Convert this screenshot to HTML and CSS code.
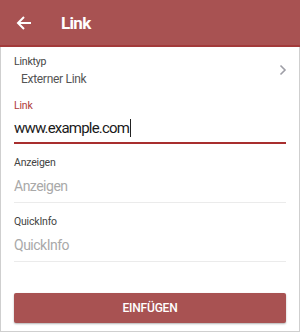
FILE: index.html
```html
<!DOCTYPE html>
<html lang="de">
<head>
<meta charset="utf-8">
<link rel="stylesheet" href="styles.css">
</head>
<body>
<div class="frame">
  <header class="bar">
    <svg class="back" width="16" height="16" viewBox="0 0 16 16"><path d="M15 8H2M8 2L2 8l6 6" fill="none" stroke="#fff" stroke-width="2"/></svg>
    <h1 class="title">Link</h1>
  </header>
  <main class="content">
    <div class="row-select">
      <div class="sel-text">
        <div class="label">Linktyp</div>
        <div class="value">Externer Link</div>
      </div>
      <svg class="chev" width="8" height="12" viewBox="0 0 8 12"><path d="M1.5 1.5L6 6l-4.5 4.5" fill="none" stroke="#9e9ea6" stroke-width="1.6"/></svg>
    </div>
    <div class="field active">
      <div class="label red">Link</div>
      <div class="input">www.example.com<span class="caret"></span></div>
    </div>
    <div class="field">
      <div class="label">Anzeigen</div>
      <div class="input ph">Anzeigen</div>
    </div>
    <div class="field">
      <div class="label">QuickInfo</div>
      <div class="input ph">QuickInfo</div>
    </div>
    <button class="btn">EINFÜGEN</button>
  </main>
</div>
</body>
</html>
```
FILE: styles.css
```css
* { box-sizing: border-box; }
html, body { margin: 0; padding: 0; }
body { font-family: Roboto, "Noto Sans", sans-serif; background: #fff; }
.frame {
  width: 300px; height: 332px;
  border: 1px solid #cfcfcf; border-top: none;
  display: flex; flex-direction: column;
}
.bar {
  flex: none;
  height: 47px; background: #a85252;
  border-bottom: 2px solid #a23a3a;
  display: flex; align-items: center;
  padding-left: 16px;
  margin: 0 -1px;
}
.back { display: block; }
.title { margin: 0 0 0 29px; font-size: 17px; letter-spacing: -0.7px; font-weight: 700; color: #fff; }
.content { padding: 0 13px; display: flex; flex-direction: column; }
.row-select { display: flex; align-items: center; justify-content: space-between; padding-top: 8px; }
.label { font-size: 10.5px; letter-spacing: -0.2px; color: #444; line-height: 13px; }
.label.red { color: #b03a3a; }
.value { font-size: 12px; letter-spacing: -0.3px; color: #555; padding-left: 7px; margin-top: 3px; line-height: 16px; }
.chev { margin-right: -1px; margin-top: -2px; }
.field { display: flex; flex-direction: column; padding-top: 12px; }
.field .label { margin-bottom: 5px; }
.input { font-size: 14px; letter-spacing: -0.5px; line-height: 20px; padding: 2px 0 6px; border-bottom: 1px solid #ebebeb; color: #222; position: relative; }
.field.active .input { border-bottom: 2px solid #a82e2e; font-size: 15px; letter-spacing: -0.8px; color: #1a1a1a; padding: 1px 0 4px; }
.input.ph { color: #a9a9a9; }
.caret { display: inline-block; width: 1px; height: 18px; background: #222; vertical-align: -4px; margin-left: 1px; }
.btn {
  margin-top: 31px; height: 30px; width: 100%;
  background: #a85252; color: #fff; border: none; border-radius: 2px;
  font-family: Roboto, sans-serif; font-size: 12px; letter-spacing: -0.2px; font-weight: 500;
  box-shadow: 0 1px 2px rgba(0,0,0,0.3);
}
```
